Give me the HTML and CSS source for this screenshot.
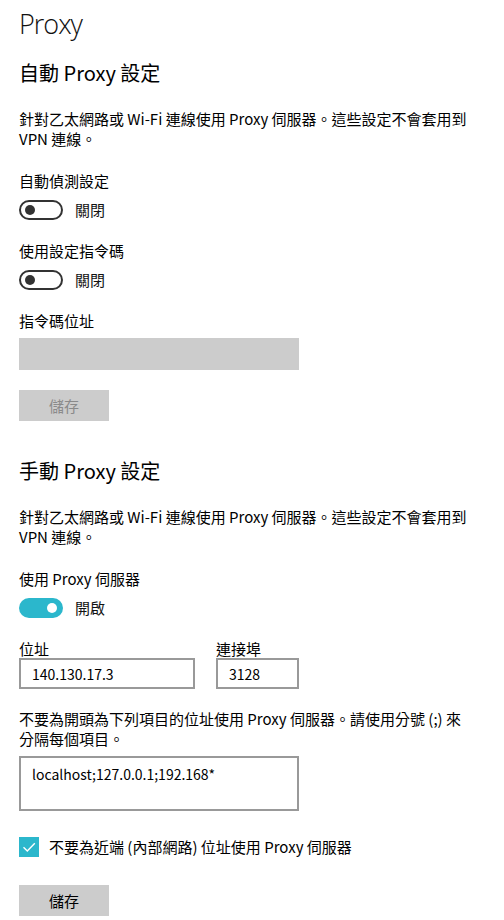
FILE: index.html
```html
<!DOCTYPE html>
<html lang="zh-Hant">
<head>
<meta charset="utf-8">
<title>Proxy</title>
<link rel="stylesheet" href="styles.css">
</head>
<body>
<main class="page">
  <h1 class="title">Proxy</h1>

  <section class="section">
    <h2 class="heading">自動 Proxy 設定</h2>
    <p class="desc">針對乙太網路或 Wi-Fi 連線使用 Proxy 伺服器。這些設定不會套用到 VPN 連線。</p>

    <div class="field">
      <div class="label">自動偵測設定</div>
      <div class="toggle-row">
        <span class="toggle off"><span class="knob"></span></span>
        <span class="toggle-text">關閉</span>
      </div>
    </div>

    <div class="field">
      <div class="label">使用設定指令碼</div>
      <div class="toggle-row">
        <span class="toggle off"><span class="knob"></span></span>
        <span class="toggle-text">關閉</span>
      </div>
    </div>

    <div class="field">
      <div class="label">指令碼位址</div>
      <div class="input disabled wide"></div>
    </div>

    <button class="btn disabled">儲存</button>
  </section>

  <section class="section manual">
    <h2 class="heading">手動 Proxy 設定</h2>
    <p class="desc">針對乙太網路或 Wi-Fi 連線使用 Proxy 伺服器。這些設定不會套用到 VPN 連線。</p>

    <div class="field">
      <div class="label">使用 Proxy 伺服器</div>
      <div class="toggle-row">
        <span class="toggle on"><span class="knob"></span></span>
        <span class="toggle-text">開啟</span>
      </div>
    </div>

    <div class="addr-row">
      <div class="addr-col">
        <div class="label small">位址</div>
        <div class="input addr">140.130.17.3</div>
      </div>
      <div class="addr-col">
        <div class="label small">連接埠</div>
        <div class="input port">3128</div>
      </div>
    </div>

    <p class="desc exc-desc">不要為開頭為下列項目的位址使用 Proxy 伺服器。請使用分號 (;) 來分隔每個項目。</p>
    <div class="input textarea wide">localhost;127.0.0.1;192.168*</div>

    <div class="check-row">
      <span class="checkbox">
        <svg width="20" height="20" viewBox="0 0 20 20"><path d="M4.5 10.2 L8.3 14 L15.8 6.2" fill="none" stroke="#fff" stroke-width="1.4"/></svg>
      </span>
      <span class="check-text">不要為近端 (內部網路) 位址使用 Proxy 伺服器</span>
    </div>

    <button class="btn">儲存</button>
  </section>
</main>
</body>
</html>
```

FILE: styles.css
```css
* { box-sizing: border-box; }
html, body { margin: 0; padding: 0; background: #fff; }
body {
  font-family: "Noto Sans CJK TC", sans-serif;
  font-size: 15px;
  line-height: 20px;
  color: #000;
}
.page {
  padding: 4px 19px 0 19px;
  width: 504px;
}
.title {
  margin: 0;
  font-family: "Open Sans", "Noto Sans CJK TC", sans-serif;
  font-weight: 300;
  font-size: 27px;
  line-height: 40px;
  letter-spacing: -1px;
  color: #111;
}
.heading {
  margin: 0;
  font-weight: 400;
  font-size: 20px;
  line-height: 28px;
}
.section { display: flex; flex-direction: column; align-items: flex-start; }
.section:first-of-type { margin-top: 15px; }
.manual { margin-top: 36px; }
.desc {
  margin: 22px 0 0 0;
  width: 450px;
}
.field { margin-top: 21px; }
.desc + .field { margin-top: 22px; }
.toggle-row {
  display: flex;
  align-items: center;
  gap: 12px;
  margin-top: 9px;
  height: 20px;
}
.toggle {
  width: 44px;
  height: 20px;
  border-radius: 10px;
  display: flex;
  align-items: center;
  padding: 0 4px;
}
.toggle.off { border: 2px solid #333; justify-content: flex-start; }
.toggle.on { background: #2bb7cc; justify-content: flex-end; padding: 0 6px; }
.knob { width: 10px; height: 10px; border-radius: 50%; }
.toggle.off .knob { background: #333; }
.toggle.on .knob { background: #fff; }
.toggle-text { color: #111; }
.input {
  margin-top: 7px;
  height: 32px;
  border: 2px solid #999;
  padding: 4px 11px;
  font-size: 14px;
  line-height: 20px;
}
.wide { width: 280px; }
.input.disabled { background: #ccc; border-color: #ccc; }
.btn {
  margin-top: 20px;
  width: 90px;
  height: 31px;
  border: none;
  background: #ccc;
  font-family: "Noto Sans CJK TC", sans-serif;
  font-size: 15px;
  color: #000;
  padding: 0;
}
.btn.disabled { color: #8a8a8a; }
.addr-row {
  display: flex;
  gap: 21px;
  margin-top: 22px;
}
.label.small { line-height: 18px; }
.addr-col .input { margin-top: 0; height: 31px; }
.addr { width: 176px; }
.port { width: 83px; }
.exc-desc { margin-top: 20px; }
.textarea { height: 55px; margin-top: 7px; padding-top: 6px; }
.check-row {
  display: flex;
  align-items: center;
  gap: 10px;
  margin-top: 26px;
}
.checkbox {
  width: 20px;
  height: 20px;
  background: #2bb7cc;
  display: block;
}
.checkbox svg { display: block; }
.manual .btn { margin-top: 28px; }
```
